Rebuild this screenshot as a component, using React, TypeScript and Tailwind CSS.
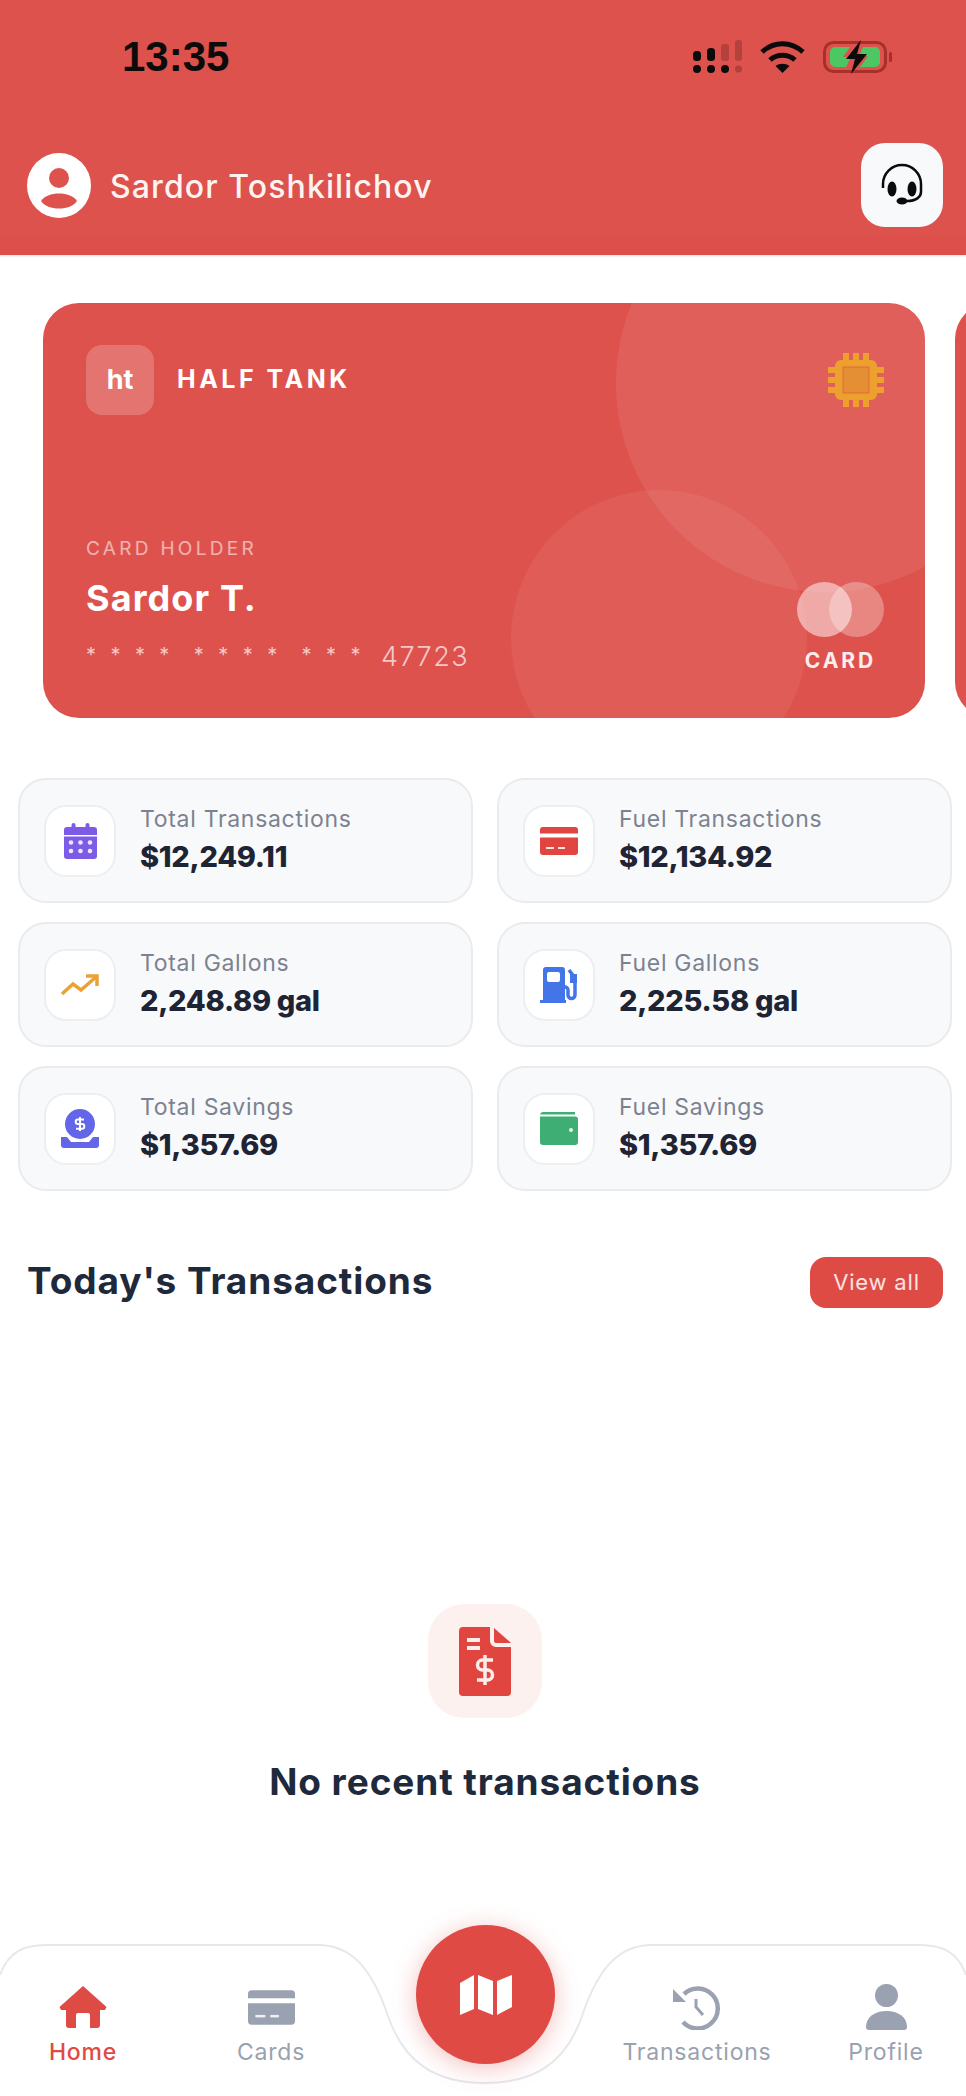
import React from "react";

const stats = [
  { label: "Total Transactions", value: "$12,249.11", icon: "calendar" },
  { label: "Fuel Transactions", value: "$12,134.92", icon: "card" },
  { label: "Total Gallons", value: "2,248.89 gal", icon: "trend" },
  { label: "Fuel Gallons", value: "2,225.58 gal", icon: "fuel" },
  { label: "Total Savings", value: "$1,357.69", icon: "savings" },
  { label: "Fuel Savings", value: "$1,357.69", icon: "wallet" },
];

function CardIcon({ color, w, h }: { color: string; w: number; h: number }) {
  return (
    <svg width={w} height={h} viewBox="0 0 38 28">
      <path d="M3 0h32a3 3 0 0 1 3 3v3.500H0V3a3 3 0 0 1 3-3z" fill={color} />
      <path d="M0 10.500h38V25a3 3 0 0 1-3 3H3a3 3 0 0 1-3-3z" fill={color} />
      <rect x="6" y="20" width="8" height="2" fill="#fff" opacity="0.85" />
      <rect x="18" y="20" width="7" height="2" fill="#fff" opacity="0.85" />
    </svg>
  );
}

function StatIcon({ name }: { name: string }) {
  if (name === "calendar") {
    return (
      <svg width="33" height="36" viewBox="0 0 33 36">
        <rect x="7.500" y="0" width="4" height="7" rx="2" fill="#7c5ce6" />
        <rect x="21.500" y="0" width="4" height="7" rx="2" fill="#7c5ce6" />
        <path d="M3 4h27a3 3 0 0 1 3 3v5H0V7a3 3 0 0 1 3-3z" fill="#7c5ce6" />
        <path d="M0 13.500h33V33a3 3 0 0 1-3 3H3a3 3 0 0 1-3-3z" fill="#7c5ce6" />
        {[5, 14.5, 24].map((x) =>
          [17.5, 26].map((y) => <circle key={`${x}-${y}`} cx={x + 2} cy={y + 2} r="2.300" fill="#fff" opacity="0.85" />)
        )}
      </svg>
    );
  }
  if (name === "trend") {
    return (
      <svg width="38" height="22" viewBox="0 0 38 22" fill="none" stroke="#eaa136" strokeWidth="3.500">
        <path d="M1 20L12 10l8 6L35 3" />
        <path d="M25 2h11v10" />
      </svg>
    );
  }
  if (name === "savings") {
    return (
      <svg width="38" height="39" viewBox="0 0 38 39">
        <circle cx="19" cy="15" r="15" fill="#6366e8" />
        <path d="M23 10.500H17a2.300 2.300 0 0 0 0 4.600h4a2.300 2.300 0 0 1 0 4.600h-6M19 8v14" fill="none" stroke="#fff" strokeWidth="2" />
        <path d="M0 28h6l4 5h18l4-5h6v8a3 3 0 0 1-3 3H3a3 3 0 0 1-3-3z" fill="#6366e8" />
      </svg>
    );
  }
  if (name === "card") return <CardIcon color="#e0453f" w={38} h={28} />;
  if (name === "fuel") {
    return (
      <svg width="38" height="36" viewBox="0 0 38 36">
        <path d="M3 3a3 3 0 0 1 3-3h16a3 3 0 0 1 3 3v30h1v3H0v-3h3z" fill="#4374e8" />
        <rect x="7" y="5" width="13" height="10" rx="2" fill="#fff" />
        <path d="M29 3l6 8v17a3.500 3.500 0 0 1-7 0v-5a3 3 0 0 0-3-3" fill="none" stroke="#4374e8" strokeWidth="3.500" />
        <path d="M30 7h7v9h-7z" fill="#4374e8" />
      </svg>
    );
  }
  return (
    <svg width="38" height="33" viewBox="0 0 38 33">
      <path d="M3 0h32v2.500H0a3 3 0 0 1 3-2.500z" fill="#3fae74" />
      <path d="M0 4.500h35a3 3 0 0 1 3 3V30a3 3 0 0 1-3 3H3a3 3 0 0 1-3-3z" fill="#3fae74" />
      <circle cx="31" cy="18" r="2" fill="#e4f5ec" />
    </svg>
  );
}

function StatusIcons() {
  return (
    <div className="flex items-center gap-[17px]">
      <svg width="50" height="34" viewBox="0 0 50 34">
        <rect x="0" y="11" width="8" height="10" rx="3.500" fill="#0b0b0b" />
        <rect x="14" y="8" width="8" height="13" rx="3.500" fill="#0b0b0b" />
        <rect x="28" y="4" width="8" height="17" rx="3" fill="#8c2f2b" opacity="0.5" />
        <rect x="42" y="0" width="7" height="21" rx="3" fill="#8c2f2b" opacity="0.5" />
        <circle cx="4" cy="29" r="4" fill="#0b0b0b" />
        <circle cx="18" cy="29" r="4" fill="#0b0b0b" />
        <circle cx="32" cy="29" r="4" fill="#0b0b0b" />
        <circle cx="45.500" cy="29" r="3.500" fill="#8c2f2b" opacity="0.55" />
      </svg>
      <svg width="45" height="32" viewBox="0 0 45 32" fill="none" stroke="#0b0b0b" strokeWidth="5">
        <path d="M2 11c12-11 29-11 41 0" />
        <path d="M10 19c7-6.500 18-6.500 25 0" />
        <path d="M22.500 32l-7-7c4-3 10-3 14 0z" fill="#0b0b0b" stroke="none" />
      </svg>
      <svg width="70" height="34" viewBox="0 0 70 34" className="ml-[1px]">
        <rect x="1.500" y="2.500" width="61" height="29" rx="9" fill="none" stroke="#a8302c" strokeWidth="3" />
        <path d="M12 7h15l-7 10h8l-5 10H12a5 5 0 0 1-5-5V12a5 5 0 0 1 5-5z" fill="#4cc764" />
        <path d="M40 7h12a5 5 0 0 1 5 5v10a5 5 0 0 1-5 5H37l8-11h-9z" fill="#4cc764" />
        <rect x="66" y="12" width="3" height="10" rx="1.500" fill="#a8302c" />
        <path d="M38 0L23 19h9l-4 15 16-20H34z" fill="#0b0b0b" />
      </svg>
    </div>
  );
}

function NavCurve() {
  return (
    <svg width="966" height="152" viewBox="0 0 966 152" fill="none" className="absolute left-0 bottom-0">
      <path
        d="M0 31C8 8 24 1 46 1H318C352 1 372 25 388 72C404 119 436 139 485 139C534 139 566 119 582 72C598 25 618 1 652 1H920C942 1 958 8 966 31V152H0Z"
        fill="#fff"
      />
      <path
        d="M0 31C8 8 24 1 46 1H318C352 1 372 25 388 72C404 119 436 139 485 139C534 139 566 119 582 72C598 25 618 1 652 1H920C942 1 958 8 966 31"
        stroke="#e6e8ec"
        strokeWidth="2"
      />
    </svg>
  );
}

function NavItem({ label, active, children }: { label: string; active?: boolean; children: React.ReactNode }) {
  return (
    <div className="flex w-[150px] flex-col items-center">
      <div className="flex h-[46px] items-center justify-center">{children}</div>
      <span className={`mt-[6px] text-[23px] leading-[32px] tracking-[0.800px] ${active ? "font-medium text-[#de4a44]" : "text-[#9aa1b0]"}`}>{label}</span>
    </div>
  );
}

export default function App() {
  return (
    <div className="relative flex h-[2096px] w-[966px] flex-col overflow-hidden bg-white font-['Inter',sans-serif]">
      {/* Header */}
      <header className="h-[255px] border-b-[20px] border-[#dd4f4a] bg-[#de524d] shadow-[0_1px_2px_rgba(0,0,0,0.12)]">
        <div className="flex items-center justify-between pl-[122px] pr-[73px] pt-[39px]">
          <span className="font-['Liberation_Sans',sans-serif] text-[42px] leading-[36px] font-bold text-[#0b0b0b]">13:35</span>
          <StatusIcons />
        </div>
        <div className="mt-[68px] flex items-center justify-between pl-[27px] pr-[23px]">
          <div className="flex items-center gap-[19px]">
            <div className="h-[65px] w-[64px]">
              <svg width="64" height="65" viewBox="0 0 64 65">
                <ellipse cx="32" cy="32.500" rx="32" ry="32.500" fill="#fff" />
                <circle cx="32" cy="25" r="10" fill="#de524d" />
                <path d="M14 48C20 38 44 38 50 48C44 58 20 58 14 48z" fill="#de524d" />
              </svg>
            </div>
            <span className="pt-[3px] text-[32px] leading-[40px] font-medium tracking-[1.100px] text-[#fdf3f1]">Sardor Toshkilichov</span>
          </div>
          <div className="flex h-[84px] w-[82px] items-center justify-center rounded-[24px] bg-[#f8f9fb]">
            <svg width="44" height="44" viewBox="0 0 44 44" fill="none">
              <path d="M3 25V21a19 19 0 0 1 38 0v8c0 5-5 9-14 9" stroke="#0b0b0b" strokeWidth="2.500" />
              <ellipse cx="12" cy="26" rx="4.500" ry="7.500" fill="#0b0b0b" />
              <ellipse cx="32" cy="26" rx="4.500" ry="7.500" fill="#0b0b0b" />
              <ellipse cx="22" cy="38" rx="5.500" ry="3.500" fill="#0b0b0b" />
            </svg>
          </div>
        </div>
      </header>

      {/* Card carousel */}
      <div className="mt-[48px] flex gap-[30px] pl-[43px]">
        <div className="relative flex h-[415px] w-[882px] shrink-0 flex-col justify-between overflow-hidden rounded-[36px] bg-[#de524d] pb-[44px] pl-[43px] pr-[41px] pt-[42px]">
          <div className="absolute left-[573px] top-[-129px] h-[418px] w-[418px] rounded-full bg-white/[0.08]" />
          <div className="absolute left-[468px] top-[187px] h-[296px] w-[296px] rounded-full bg-white/[0.06]" />

          <div className="relative flex items-start justify-between">
            <div className="flex items-center gap-[23px]">
              <div className="flex h-[70px] w-[68px] items-center justify-center rounded-[16px] bg-white/20 text-[27px] font-bold text-white">ht</div>
              <span className="text-[25px] font-bold tracking-[3.500px] text-white">HALF TANK</span>
            </div>
            <svg width="56" height="54" viewBox="0 0 56 54" className="mt-[8px]">
              <rect x="7" y="7" width="42" height="40" rx="6" fill="#eea02e" />
              <rect x="15" y="14" width="26" height="26" fill="#e58f35" stroke="#de6a3f" strokeWidth="1" />
              {[15, 25, 35].map((x) => (
                <g key={x}>
                  <rect x={x} y="0" width="6" height="8" fill="#eea02e" />
                  <rect x={x} y="46" width="6" height="8" fill="#eea02e" />
                </g>
              ))}
              {[14, 24, 34].map((y) => (
                <g key={y}>
                  <rect x="0" y={y} width="8" height="6" fill="#eea02e" />
                  <rect x="48" y={y} width="8" height="6" fill="#eea02e" />
                </g>
              ))}
            </svg>
          </div>

          <div className="relative flex items-end justify-between">
            <div>
              <div className="text-[19px] leading-[24px] tracking-[3.300px] text-white/55">CARD HOLDER</div>
              <div className="mt-[15px] text-[36px] leading-[44px] font-bold tracking-[1.100px] text-white">Sardor T.</div>
              <div className="mt-[20px] flex h-[34px] items-center text-white/70">
                <span className="mb-[5px] text-[20px] tracking-[4.400px]">* * * * &nbsp;* * * * &nbsp;* * *</span>
                <span className="ml-[16px] text-[27px] font-light tracking-[1.500px]">47723</span>
              </div>
            </div>
            <div className="flex flex-col items-center">
              <div className="relative h-[55px] w-[87px]">
                <div className="absolute left-0 top-0 h-[55px] w-[55px] rounded-full bg-white/50" />
                <div className="absolute right-0 top-0 h-[55px] w-[55px] rounded-full bg-white/30" />
              </div>
              <span className="mt-[11px] text-[21px] leading-[26px] font-bold tracking-[3px] text-white/90">CARD</span>
            </div>
          </div>
        </div>
        <div className="h-[415px] w-[882px] shrink-0 rounded-[36px] bg-[#de524d]" />
      </div>

      {/* Stats */}
      <div className="mt-[60px] grid grid-cols-2 gap-x-[24px] gap-y-[19px] pl-[18px] pr-[14px]">
        {stats.map((s) => (
          <div key={s.label} className="flex h-[125px] items-center gap-[24px] rounded-[28px] border-2 border-[#e9ebef] bg-[#f8f9fb] pl-[24px]">
            <div className="flex h-[72px] w-[72px] items-center justify-center rounded-[22px] border-2 border-[#eceef2] bg-white">
              <StatIcon name={s.icon} />
            </div>
            <div className="pb-[2px]">
              <div className="text-[23px] leading-[35px] tracking-[0.700px] text-[#7c8290]">{s.label}</div>
              <div className="text-[29px] leading-[40px] font-extrabold tracking-[-0.300px] text-[#1e2433]">{s.value}</div>
            </div>
          </div>
        ))}
      </div>

      {/* Today's transactions */}
      <div className="mt-[65px] flex items-center justify-between pl-[27px] pr-[23px]">
        <h2 className="mb-[2px] text-[37px] leading-[50px] font-bold tracking-[0.900px] text-[#1e293b]">Today's Transactions</h2>
        <div className="flex h-[51px] w-[133px] items-center justify-center rounded-[16px] bg-[#de4a44] text-[22px] tracking-[0.800px] text-white/85">View all</div>
      </div>

      <div className="flex flex-1 flex-col items-center pl-[4px] pt-[296px]">
        <div className="flex h-[114px] w-[114px] items-center justify-center rounded-[36px] bg-[#fdf1ef]">
          <svg width="52" height="69" viewBox="0 0 52 69">
            <path d="M4 0h27v14a6 6 0 0 0 6 6h15v45a4 4 0 0 1-4 4H4a4 4 0 0 1-4-4V4a4 4 0 0 1 4-4z" fill="#e0453f" />
            <path d="M35 1l17 15H37a2 2 0 0 1-2-2z" fill="#e0453f" />
            <rect x="8" y="11" width="13" height="4" fill="#fdeeec" />
            <rect x="8" y="19" width="13" height="4" fill="#fdeeec" />
            <path d="M34 33H23.500a5 5 0 0 0 0 10h5a5 5 0 0 1 0 10H18M26 28v30" fill="none" stroke="#fdeeec" strokeWidth="3.500" />
          </svg>
        </div>
        <div className="mt-[39px] text-[37px] leading-[50px] font-bold tracking-[0.900px] text-[#1e293b]">No recent transactions</div>
      </div>

      {/* Bottom nav */}
      <nav className="relative flex h-[152px] justify-between pl-[8px] pr-[5px] pt-[40px]">
        <NavCurve />
        <div className="relative flex gap-[38px]">
          <NavItem label="Home" active>
            <svg width="48" height="42" viewBox="0 0 48 42">
              <path d="M24 0L47.500 21l-1.500 3H41v15a3 3 0 0 1-3 3H31V29a2 2 0 0 0-2-2H19a2 2 0 0 0-2 2v13H10a3 3 0 0 1-3-3V24H2L.500 21z" fill="#de4a44" />
            </svg>
          </NavItem>
          <NavItem label="Cards">
            <CardIcon color="#9aa1b0" w={47} h={35} />
          </NavItem>
        </div>
        <div className="relative flex gap-[39px]">
          <NavItem label="Transactions">
            <svg width="48" height="46" viewBox="0 0 48 46" fill="none">
              <path d="M11 10A20 20 0 1 1 10 38" stroke="#9aa1b0" strokeWidth="4.500" />
              <path d="M0 5v13h13z" fill="#9aa1b0" />
              <path d="M23 15v8l7 8" stroke="#9aa1b0" strokeWidth="3" />
            </svg>
          </NavItem>
          <NavItem label="Profile">
            <svg width="41" height="46" viewBox="0 0 41 46">
              <circle cx="20.500" cy="11.500" r="11.500" fill="#9aa1b0" />
              <path d="M0 43C0 33 9 27 20.500 27S41 33 41 43a3 3 0 0 1-3 3H3a3 3 0 0 1-3-3z" fill="#9aa1b0" />
            </svg>
          </NavItem>
        </div>
        <div className="absolute left-[416px] top-[-19px] flex h-[139px] w-[139px] items-center justify-center rounded-full bg-[#df4a45] shadow-[0_4px_24px_rgba(222,74,68,0.35)]">
          <svg width="52" height="40" viewBox="0 0 52 40">
            <path d="M0 8l14-8v34L0 40z" fill="#fff" />
            <path d="M18 0l15 6v34l-15-6z" fill="#fff" />
            <path d="M37 6l15-6v32l-15 8z" fill="#fff" />
          </svg>
        </div>
      </nav>
    </div>
  );
}
